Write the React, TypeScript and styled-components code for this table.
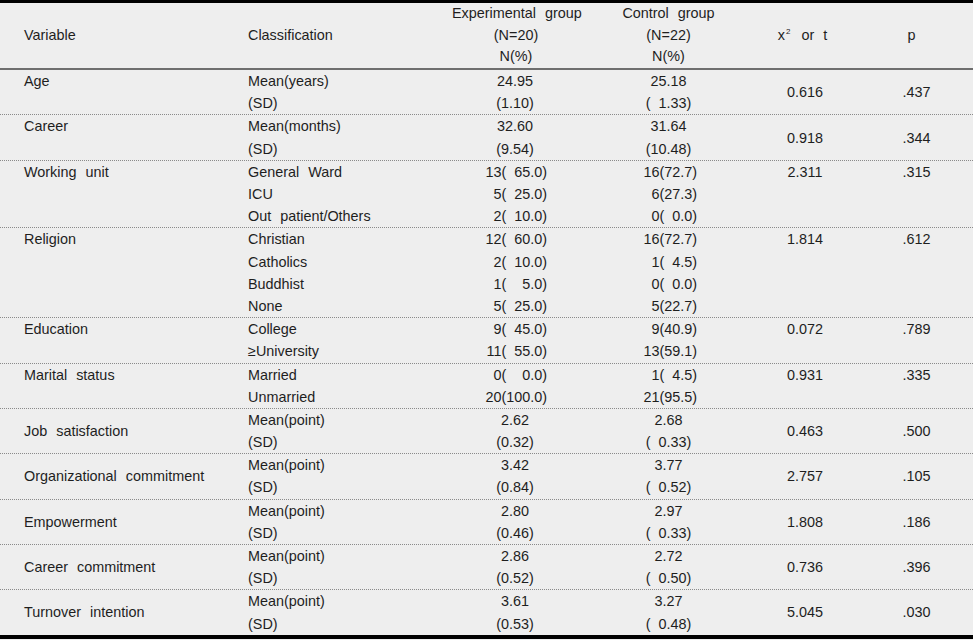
import React from "react";
import styled, { createGlobalStyle } from "styled-components";

const GlobalStyle = createGlobalStyle`
  html, body {
    margin: 0;
    padding: 0;
    background: #eeeeee;
  }
  body {
    font-family: "Liberation Sans", Arial, sans-serif;
    color: #1e1e1e;
  }
`;

const COLS = "248px 204px 130px 173px 105px 113px";
const LINE = 22.2;

const Table = styled.div`
  width: 973px;
  background: #eeeeee;
  border-top: 3px solid #000;
  border-bottom: 4px solid #000;
  font-size: 14.4px;
  word-spacing: 5px;
`;

const HeaderRow = styled.div`
  display: grid;
  grid-template-columns: ${COLS};
  border-bottom: 2px solid #6e6e6e;
`;

const Group = styled.div<{ $first?: boolean }>`
  display: grid;
  grid-template-columns: ${COLS};
  border-top: ${(p) => (p.$first ? "none" : "1px dotted #8a8a8a")};
`;

const Cell = styled.div<{
  $align?: "left" | "center" | "right";
  $valign?: "start" | "center";
  $pl?: number;
  $pr?: number;
}>`
  display: flex;
  flex-direction: column;
  justify-content: ${(p) => (p.$valign === "center" ? "center" : "flex-start")};
  text-align: ${(p) => p.$align || "left"};
  padding-left: ${(p) => p.$pl || 0}px;
  padding-right: ${(p) => p.$pr || 0}px;
`;

const Line = styled.div<{ $h?: number }>`
  height: ${(p) => p.$h || LINE}px;
  line-height: ${(p) => p.$h || LINE}px;
  white-space: pre;
`;

const HeadLine = styled(Line).attrs({ $h: 21.7 })``;

const Sup = styled.sup`
  font-size: 8px;
  vertical-align: 6px;
  line-height: 0;
  margin-left: 1px;
  margin-right: 2px;
`;

type Row = {
  v: string;
  vAlign: "start" | "center";
  cls: string[];
  exp: string[];
  ctl: string[];
  mode: "mean" | "count";
  x: string;
  p: string;
  sAlign: "start" | "center";
};

const F = "\u2007";

const rows: Row[] = [
  { v: "Age", vAlign: "start", cls: ["Mean(years)", "(SD)"], exp: ["24.95", "(1.10)"], ctl: ["25.18", `(${F}1.33)`], mode: "mean", x: "0.616", p: ".437", sAlign: "center" },
  { v: "Career", vAlign: "start", cls: ["Mean(months)", "(SD)"], exp: ["32.60", "(9.54)"], ctl: ["31.64", "(10.48)"], mode: "mean", x: "0.918", p: ".344", sAlign: "center" },
  { v: "Working unit", vAlign: "start", cls: ["General Ward", "ICU", "Out patient/Others"], exp: [`13(${F}65.0)`, `5(${F}25.0)`, `2(${F}10.0)`], ctl: ["16(72.7)", "6(27.3)", `0(${F}0.0)`], mode: "count", x: "2.311", p: ".315", sAlign: "start" },
  { v: "Religion", vAlign: "start", cls: ["Christian", "Catholics", "Buddhist", "None"], exp: [`12(${F}60.0)`, `2(${F}10.0)`, `1(${F}${F}5.0)`, `5(${F}25.0)`], ctl: ["16(72.7)", `1(${F}4.5)`, `0(${F}0.0)`, "5(22.7)"], mode: "count", x: "1.814", p: ".612", sAlign: "start" },
  { v: "Education", vAlign: "start", cls: ["College", "\u2265University"], exp: [`9(${F}45.0)`, `11(${F}55.0)`], ctl: ["9(40.9)", "13(59.1)"], mode: "count", x: "0.072", p: ".789", sAlign: "start" },
  { v: "Marital status", vAlign: "start", cls: ["Married", "Unmarried"], exp: [`0(${F}${F}0.0)`, "20(100.0)"], ctl: [`1(${F}4.5)`, "21(95.5)"], mode: "count", x: "0.931", p: ".335", sAlign: "start" },
  { v: "Job satisfaction", vAlign: "center", cls: ["Mean(point)", "(SD)"], exp: ["2.62", "(0.32)"], ctl: ["2.68", `(${F}0.33)`], mode: "mean", x: "0.463", p: ".500", sAlign: "center" },
  { v: "Organizational commitment", vAlign: "center", cls: ["Mean(point)", "(SD)"], exp: ["3.42", "(0.84)"], ctl: ["3.77", `(${F}0.52)`], mode: "mean", x: "2.757", p: ".105", sAlign: "center" },
  { v: "Empowerment", vAlign: "center", cls: ["Mean(point)", "(SD)"], exp: ["2.80", "(0.46)"], ctl: ["2.97", `(${F}0.33)`], mode: "mean", x: "1.808", p: ".186", sAlign: "center" },
  { v: "Career commitment", vAlign: "center", cls: ["Mean(point)", "(SD)"], exp: ["2.86", "(0.52)"], ctl: ["2.72", `(${F}0.50)`], mode: "mean", x: "0.736", p: ".396", sAlign: "center" },
  { v: "Turnover intention", vAlign: "center", cls: ["Mean(point)", "(SD)"], exp: ["3.61", "(0.53)"], ctl: ["3.27", `(${F}0.48)`], mode: "mean", x: "5.045", p: ".030", sAlign: "center" },
];

const Lines: React.FC<{ items: string[] }> = ({ items }) => (
  <>
    {items.map((t, i) => (
      <Line key={i}>{t}</Line>
    ))}
  </>
);

export default function App() {
  return (
    <>
      <GlobalStyle />
      <Table>
        <HeaderRow>
          <Cell $valign="center" $pl={24}>
            <HeadLine>Variable</HeadLine>
          </Cell>
          <Cell $valign="center">
            <HeadLine>Classification</HeadLine>
          </Cell>
          <Cell $align="center" $pr={2}>
            <HeadLine>Experimental group</HeadLine>
            <HeadLine>(N=20)</HeadLine>
            <HeadLine>N(%)</HeadLine>
          </Cell>
          <Cell $align="center">
            <HeadLine>Control group</HeadLine>
            <HeadLine>(N=22)</HeadLine>
            <HeadLine>N(%)</HeadLine>
          </Cell>
          <Cell $align="center" $valign="center" $pr={10}>
            <HeadLine>
              x<Sup>2</Sup> or t
            </HeadLine>
          </Cell>
          <Cell $align="center" $valign="center" $pr={10}>
            <HeadLine>p</HeadLine>
          </Cell>
        </HeaderRow>
        {rows.map((r, i) => (
          <Group key={r.v} $first={i === 0}>
            <Cell $valign={r.vAlign} $pl={24}>
              <Line>{r.v}</Line>
            </Cell>
            <Cell>
              <Lines items={r.cls} />
            </Cell>
            {r.mode === "mean" ? (
              <Cell $align="center" $pr={4}>
                <Lines items={r.exp} />
              </Cell>
            ) : (
              <Cell $align="right" $pr={35}>
                <Lines items={r.exp} />
              </Cell>
            )}
            {r.mode === "mean" ? (
              <Cell $align="center">
                <Lines items={r.ctl} />
              </Cell>
            ) : (
              <Cell $align="right" $pr={58}>
                <Lines items={r.ctl} />
              </Cell>
            )}
            <Cell $align="center" $valign={r.sAlign} $pr={5}>
              <Line>{r.x}</Line>
            </Cell>
            <Cell $align="center" $valign={r.sAlign}>
              <Line>{r.p}</Line>
            </Cell>
          </Group>
        ))}
      </Table>
    </>
  );
}
